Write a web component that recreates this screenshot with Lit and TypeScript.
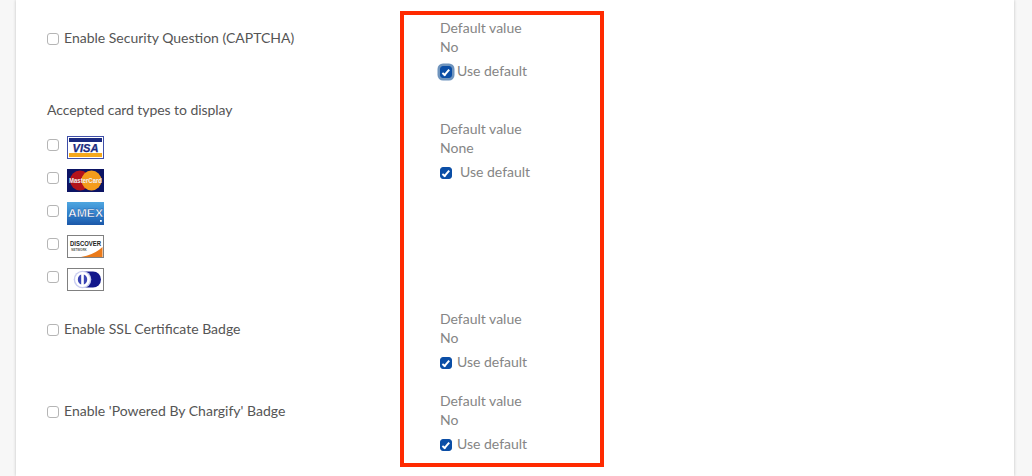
import { LitElement, html, css, svg } from "lit";
import { customElement } from "lit/decorators.js";

const visa = svg`<svg class="card" viewBox="0 0 37 23" width="37" height="23">
  <rect x=".5" y=".5" width="36" height="22" fill="#fff" stroke="#3f4fa8"/>
  <rect x="2" y="2" width="33" height="4" fill="#1a2a80"/>
  <rect x="2" y="17" width="33" height="4" fill="#f5a81c"/>
  <text x="18.5" y="15.6" text-anchor="middle" font-family="Liberation Sans" font-size="11" font-weight="700" font-style="italic" textLength="26" lengthAdjust="spacingAndGlyphs" fill="#1a2a80" stroke="#1a2a80" stroke-width=".25">VISA</text>
</svg>`;

const mastercard = svg`<svg class="card" viewBox="0 0 37 23" width="37" height="23">
  <rect width="37" height="23" fill="#0c1464"/>
  <circle cx="13" cy="11.5" r="10" fill="#b3131b"/>
  <circle cx="24.5" cy="11.5" r="10" fill="#f49c1c"/>
  <text x="18.5" y="14" text-anchor="middle" font-family="Liberation Sans" font-size="6.6" font-weight="700" textLength="33" lengthAdjust="spacingAndGlyphs" fill="#f2f2f2">MasterCard</text>
</svg>`;

const amex = svg`<svg class="card" viewBox="0 0 37 23" width="37" height="23">
  <defs><linearGradient id="ax" x1="0" y1="0" x2="0" y2="1">
    <stop offset="0" stop-color="#4fa6e0"/><stop offset=".55" stop-color="#2f7fcb"/><stop offset="1" stop-color="#1b57a8"/>
  </linearGradient></defs>
  <rect width="37" height="23" fill="url(#ax)"/>
  <text x="18.5" y="15" text-anchor="middle" font-family="Liberation Sans" font-size="11" font-weight="700" textLength="35" lengthAdjust="spacingAndGlyphs" fill="#fff" stroke="#14509f" stroke-width=".35">AMEX</text>
  <rect x="33" y="18" width="1.8" height="1.8" fill="#fff"/>
</svg>`;

const discover = svg`<svg class="card" viewBox="0 0 37 23" width="37" height="23">
  <rect x=".5" y=".5" width="36" height="22" fill="#fff" stroke="#808080"/>
  <path d="M14 22 Q27 20 35.5 12 V22 Z" fill="#ea7a1a"/>
  <text x="18.5" y="11.4" text-anchor="middle" font-family="Liberation Sans" font-size="6.4" font-weight="700" textLength="31" lengthAdjust="spacingAndGlyphs" fill="#222">DISCOVER</text>
  <text x="12" y="15.8" text-anchor="middle" font-family="Liberation Sans" font-size="3" font-weight="700" fill="#555">NETWORK</text>
</svg>`;

const diners = svg`<svg class="card" viewBox="0 0 37 23" width="37" height="23">
  <rect x=".5" y=".5" width="36" height="22" fill="#fff" stroke="#808080"/>
  <rect x="8" y="3.5" width="26" height="16" rx="8" fill="#12188c"/>
  <circle cx="15.5" cy="11.5" r="8.8" fill="#c9cdf0"/>
  <circle cx="15.5" cy="11.5" r="7.4" fill="#fff"/>
  <path d="M14.2 6.5 A5.4 5.4 0 0 0 14.2 16.5 Z" fill="#3a44b4"/>
  <path d="M16.8 6.5 A5.4 5.4 0 0 1 16.8 16.5 Z" fill="#3a44b4"/>
</svg>`;

@customElement("app-root")
export class AppRoot extends LitElement {
  static styles = css`
    :host {
      display: block;
      height: 476px;
      overflow: hidden;
      background: #f7f7f7;
      font-family: "Lato", "Liberation Sans", sans-serif;
      font-size: 14px;
      line-height: 19px;
    }
    .panel {
      position: relative;
      box-sizing: border-box;
      height: 476px;
      margin: 0 18px 0 16px;
      padding: 18px 0 0 31px;
      background: #fff;
      box-shadow: 0 0 3px rgba(0, 0, 0, 0.22);
      display: grid;
      grid-template-columns: 393px 1fr;
      grid-template-rows: 82px 209px 82px auto;
    }
    .highlight {
      position: absolute;
      left: 384px;
      top: 11px;
      width: 204px;
      height: 456px;
      box-sizing: border-box;
      border: 4px solid #ff2a00;
      pointer-events: none;
    }
    .left {
      color: #555;
    }
    .left.offset {
      padding-top: 10px;
    }
    .heading {
      letter-spacing: -0.065px;
    }
    .right {
      color: #858585;
    }
    .right.offset {
      padding-top: 19px;
    }
    .check {
      display: flex;
      align-items: flex-start;
      gap: 5px;
    }
    .use {
      margin-top: 5px;
    }
    .use.wide {
      gap: 8px;
    }
    input {
      appearance: none;
      -webkit-appearance: none;
      box-sizing: border-box;
      flex: none;
      width: 12px;
      height: 12px;
      margin: 5px 0 0;
      position: relative;
      background: #fff;
      border: 1px solid #b5b5b5;
      border-radius: 3px;
    }
    input:checked {
      background: #0b4ea6;
      border-color: #0b4ea6;
    }
    input:checked::after {
      content: "";
      position: absolute;
      left: 3px;
      top: 0.5px;
      width: 4px;
      height: 7.5px;
      border: solid #fff;
      border-width: 0 2px 2px 0;
      transform: rotate(40deg);
      box-sizing: border-box;
    }
    input.focus {
      box-shadow: 0 0 0 2.5px #6f94bd;
    }
    .cards {
      display: flex;
      flex-direction: column;
      gap: 10px;
      margin-top: 16.5px;
    }
    .card-row {
      display: flex;
      align-items: flex-start;
      gap: 8px;
      height: 23px;
    }
    .card-row input {
      margin-top: 3px;
    }
    .card {
      display: block;
    }
  `;

  private value(text: string, focus = false, wide = false, offset = false) {
    return html`<div class="right ${offset ? "offset" : ""}">
      <div>Default value</div>
      <div>${text}</div>
      <label class="check use ${wide ? "wide" : ""}">
        <input type="checkbox" class=${focus ? "focus" : ""} checked />
        <span>Use default</span>
      </label>
    </div>`;
  }

  render() {
    const cards = [visa, mastercard, amex, discover, diners];
    return html`<div class="panel">
      <div class="left offset">
        <label class="check"><input type="checkbox" /><span>Enable Security Question (CAPTCHA)</span></label>
      </div>
      ${this.value("No", true)}
      <div class="left">
        <div class="heading">Accepted card types to display</div>
        <div class="cards">
          ${cards.map((c) => html`<div class="card-row"><input type="checkbox" />${c}</div>`)}
        </div>
      </div>
      ${this.value("None", false, true, true)}
      <div class="left offset">
        <label class="check"><input type="checkbox" /><span>Enable SSL Certificate Badge</span></label>
      </div>
      ${this.value("No")}
      <div class="left offset">
        <label class="check"><input type="checkbox" /><span>Enable 'Powered By Chargify' Badge</span></label>
      </div>
      ${this.value("No")}
      <div class="highlight"></div>
    </div>`;
  }
}
